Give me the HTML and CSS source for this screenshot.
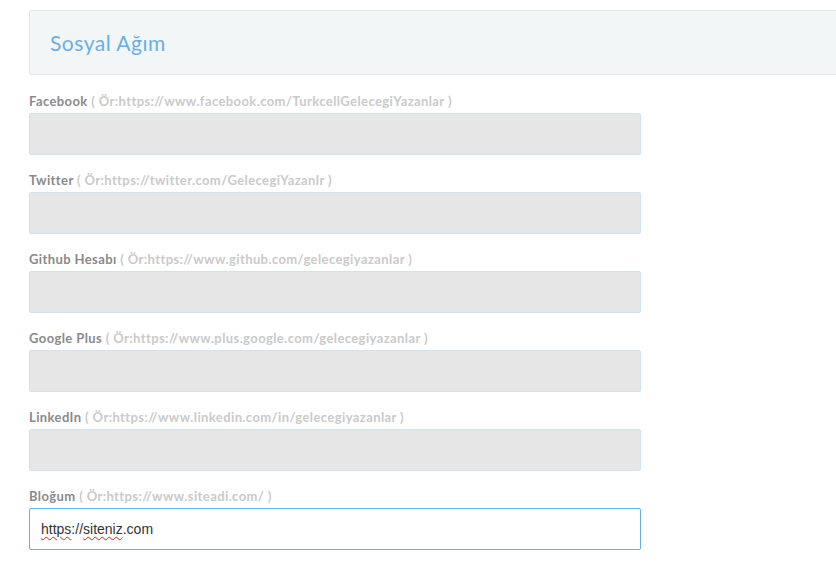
FILE: index.html
```html
<!DOCTYPE html>
<html lang="tr">
<head>
<meta charset="utf-8">
<title>Sosyal Ağım</title>
<link rel="stylesheet" href="styles.css">
</head>
<body>
<div class="page">
  <div class="panel-head"><h3 class="panel-title">Sosyal Ağım</h3></div>
  <form class="form">
    <div class="group">
      <label class="label">Facebook <span class="hint">( Ör:https://www.facebook.com/TurkcellGelecegiYazanlar )</span></label>
      <div class="field"></div>
    </div>
    <div class="group">
      <label class="label">Twitter <span class="hint">( Ör:https://twitter.com/GelecegiYazanlr )</span></label>
      <div class="field"></div>
    </div>
    <div class="group">
      <label class="label">Github Hesabı <span class="hint">( Ör:https://www.github.com/gelecegiyazanlar )</span></label>
      <div class="field"></div>
    </div>
    <div class="group">
      <label class="label">Google Plus <span class="hint">( Ör:https://www.plus.google.com/gelecegiyazanlar )</span></label>
      <div class="field"></div>
    </div>
    <div class="group">
      <label class="label">LinkedIn <span class="hint">( Ör:https://www.linkedin.com/in/gelecegiyazanlar )</span></label>
      <div class="field"></div>
    </div>
    <div class="group">
      <label class="label">Bloğum <span class="hint">( Ör:https://www.siteadi.com/ )</span></label>
      <div class="field field-focus" role="textbox"><span class="misspelt">https</span>://<span class="misspelt">siteniz</span>.com</div>
    </div>
  </form>
</div>
</body>
</html>
```
FILE: styles.css
```css
html, body {
  margin: 0;
  padding: 0;
  background: #fff;
}
body {
  font-family: "Lato", "Liberation Sans", sans-serif;
}
.page {
  padding: 10px 0 0 29px;
}
.panel-head {
  height: 63px;
  background: #f3f6f7;
  border: 1px solid #e2e8ea;
  border-right: none;
  border-radius: 3px 0 0 3px;
  display: flex;
  align-items: center;
  padding-left: 20px;
}
.panel-title {
  margin: 0;
  font-size: 21px;
  font-weight: 400;
  color: #6aaee8;
  letter-spacing: 0.5px;
}
.form {
  display: flex;
  flex-direction: column;
  gap: 17px;
  margin-top: 18px;
}
.group {
  display: flex;
  flex-direction: column;
  gap: 4px;
}
.label {
  font-size: 13px;
  line-height: 16px;
  font-weight: 700;
  color: #8a8a8a;
  letter-spacing: 0.4px;
}
.hint {
  font-weight: 700;
  color: #cacaca;
}
.field {
  width: 610px;
  height: 40px;
  background: #e6e6e6;
  border: 1px solid #cde2f2;
  border-radius: 2px;
  box-sizing: content-box;
}
.field-focus {
  background: #fff;
  border-color: #66afe9;
  font-family: "Liberation Sans", Arial, sans-serif;
  font-size: 14px;
  letter-spacing: 0;
  color: #333;
  line-height: 40px;
  padding-left: 11px;
  width: 599px;
}
.misspelt {
  text-decoration: underline wavy #e02020;
  text-decoration-thickness: 1px;
  text-underline-offset: 2px;
}
```
